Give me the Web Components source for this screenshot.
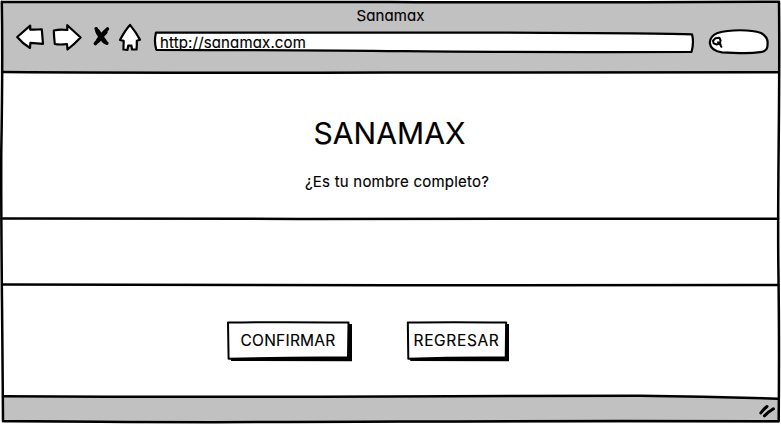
<!DOCTYPE html>
<html lang="es"><head><meta charset="utf-8"><title>Sanamax</title>
<style>body{margin:0;background:#fff;font-family:Inter,"Liberation Sans",sans-serif;color:#000;-webkit-text-stroke:.15px #000}</style></head>
<body>
<sketch-browser>
  <sketch-toolbar slot="top" caption="Sanamax" url="http://sanamax.com"></sketch-toolbar>
  <page-heading><span slot="title">SANAMAX</span><span slot="question">¿Es tu nombre completo?</span></page-heading>
  <answer-band></answer-band>
  <button-row>
    <sketch-button style="--w:125px;--ls:.25px">CONFIRMAR</sketch-button>
    <sketch-button style="--w:102px;--ls:.65px">REGRESAR</sketch-button>
  </button-row>
</sketch-browser>
<script>
const define=(name,html,setup)=>customElements.define(name,class extends HTMLElement{
  connectedCallback(){
    if(this.shadowRoot)return;
    this.attachShadow({mode:'open'}).innerHTML=`<style>:host{display:block;box-sizing:border-box}*{box-sizing:border-box}svg{display:block;fill:none;stroke:#000;stroke-linejoin:round;stroke-linecap:round;overflow:visible}</style>`+html;
    if(setup)setup(this,this.shadowRoot);
  }
});
define('sketch-icon',`<style>:host{flex:none}</style>`,(el,root)=>{
  const icons={
    back:[28,26,'<path fill="#fff" stroke-width="2.2" d="M1.2 13 14.2 1.7 14.2 5.6C18 5.9 22 5.3 25.8 5.3L27 19.8 14.4 18.8 14 24Q6.5 19.5 1.2 13Z"/>'],
    forward:[28,26,'<path fill="#fff" stroke-width="2.2" d="M.8 6.5Q7 5 14.3 6L14.3 1.2 27.6 13.5Q21 20.5 14.5 25.5L14 20Q7 21 1.8 20Q1 13 .8 6.5Z"/>'],
    stop:[17,22,'<path stroke-width="3.6" d="M3.2 2.8C5 9 9 14 13.8 17.2M14.4 3Q10 7 8 10.5T2.4 17.6"/><path stroke-width="4.6" d="M4.8 5.5 7.7 10 11.4 15.2M12.3 6.2 8.5 10 5.3 14.4"/>'],
    home:[22,27,'<path fill="#fff" stroke-width="2.2" d="M1 16C3.8 10.5 7.3 4.9 11 .9Q17.2 8.5 21 15.7L17.8 16.7Q18 21.5 17.5 25.5L13.1 25.5 12.4 21.7 9.2 21.7 8.5 25.8 4.4 25.5 4.7 16.9Z"/>'],
    search:[11,12,'<path fill="none" stroke-width="2" d="M3.4 1.2 7.4 .7 8.6 3.4 7.6 6.6 4.6 7.5 1.7 6.4 1 3.8ZM6 5.3 8.6 7.4M8.4 8.2 9.4 9.8"/>']
  },i=icons[el.getAttribute('name')];
  root.innerHTML+=`<svg width="${i[0]}" height="${i[1]}">${i[2]}</svg>`;
});
define('sketch-toolbar',`<style>
:host{height:72px;background:#c1c1c1;padding-top:7px}
.caption{height:16px;line-height:16px;text-align:center;font-size:15px;letter-spacing:.12px;font-feature-settings:"cv11"}
.row{display:flex;height:30px;padding-left:13.5px}
.fwd{margin-left:9.5px}.stop{margin:2px 0 0 12px}.home{margin:0 0 0 8.5px}
.address{display:grid;width:541px;height:22px;margin:8px 0 0 13.5px}
.address>*,.search>*{grid-area:1/1}
.url{font-size:15px;line-height:18px;height:22px;padding-left:6px;margin-top:2px;letter-spacing:.15px;font-feature-settings:"cv11"}
.search{display:grid;width:62px;height:26px;margin:5px 0 0 12.5px}
.search sketch-icon{margin:8px 0 0 4px}
</style><div class="caption"></div>
<div class="row"><sketch-icon name="back"></sketch-icon><sketch-icon class="fwd" name="forward"></sketch-icon><sketch-icon class="stop" name="stop"></sketch-icon><sketch-icon class="home" name="home"></sketch-icon>
<div class="address"><svg width="541" height="22"><path fill="#fff" stroke-width="2.2" d="M2 .5Q130 .1 320 .6T538 2.4Q540.2 10 537.5 20Q340 20.3 250 19.2T2.3 17.8Q-.2 9 2 .5Z"/></svg><div class="url"></div></div>
<div class="search"><svg width="62" height="26"><path fill="#fff" stroke-width="2.2" d="M9.5 4C22 .3 43 .4 53 4Q60.5 8 59.5 15.5Q60 22.5 52 23.2C38 25.2 27 23.5 14 23.4C6 22 2.3 18.8 1.8 13.8Q2 7 9.5 4Z"/></svg><sketch-icon name="search"></sketch-icon></div></div>`,
(el,root)=>{root.querySelector('.caption').textContent=el.getAttribute('caption');root.querySelector('.url').textContent=el.getAttribute('url')});
define('page-heading',`<style>
:host{height:146px;padding-top:42px;text-align:center;font-feature-settings:"cv11"}
.title{font-size:30px;line-height:36px;letter-spacing:.1px;padding-right:2px}
.question{font-size:15px;line-height:20px;margin-top:21px;padding-left:13px;letter-spacing:.22px}
</style><div class="title"><slot name="title"></slot></div><div class="question"><slot name="question"></slot></div>`);
define('answer-band',`<style>:host{height:67px}</style>`);
define('button-row',`<style>:host{height:112px;display:flex;gap:55px;padding:35px 0 0 225px}</style><slot></slot>`);
define('sketch-button',`<style>
:host{display:grid;flex:none;width:var(--w);height:41px;font-size:15.5px;letter-spacing:var(--ls)}
:host>*,svg,.label{grid-area:1/1}
svg{width:100%;height:100%}
.label{line-height:20px;margin:10px 3px 0 0;text-align:center;white-space:nowrap}
</style><svg viewBox="0 0 125 41" preserveAspectRatio="none"><path fill="#000" stroke="none" d="M4 3 125 3V40.3L4 40Z"/><path fill="#fff" stroke-width="2" vector-effect="non-scaling-stroke" d="M1 1.6Q45 .8 121.5 1.5L121 36.6Q60 36.2 1.6 37.8Z"/></svg><div class="label"><slot></slot></div>`);
define('sketch-browser',`<style>
:host{position:relative;width:781px;height:424px;padding:1px 2px 1px;overflow:hidden}
.main{display:flex;flex-direction:column}
.footer{height:25px;background:#c1c1c1}
.ink{position:absolute;inset:0;pointer-events:none}
</style><div class="main"><slot name="top"></slot><slot></slot><div class="footer"></div></div>
<svg class="ink" width="781" height="424"><path stroke="none" fill="#c1c1c1" d="M3 396H640L778 398V421H3Z"/><path stroke="none" fill="#fff" d="M690 393H778V398L710 396.3Z"/><g stroke-width="2.5">
<path d="M1.8 1.7Q250 1.2 390 2T779 1.8C780.2 100 777.2 190 778.4 270Q779.4 340 778.7 421.3Q590 420.6 400 421.6T100 421.8L3 421C2.2 300 .8 220 1.3 150Q2.8 65 1.8 1.7"/>
<path d="M3 72.1Q160 73.2 390 72.6T778 72.2M3 218.4Q120 219 300 218.9T778 218.8M3 284.6Q180 285.5 390 285.3T778 285.1M3 396.2Q190 397.2 390 396.4T640 395.8Q710 396.5 778 398.8"/></g>
<path stroke-width="3" d="M760.8 413Q763.5 409.2 767 406.5M764.4 415.8Q769 411.5 773.4 408.8"/></svg>`);
</script></body></html>
